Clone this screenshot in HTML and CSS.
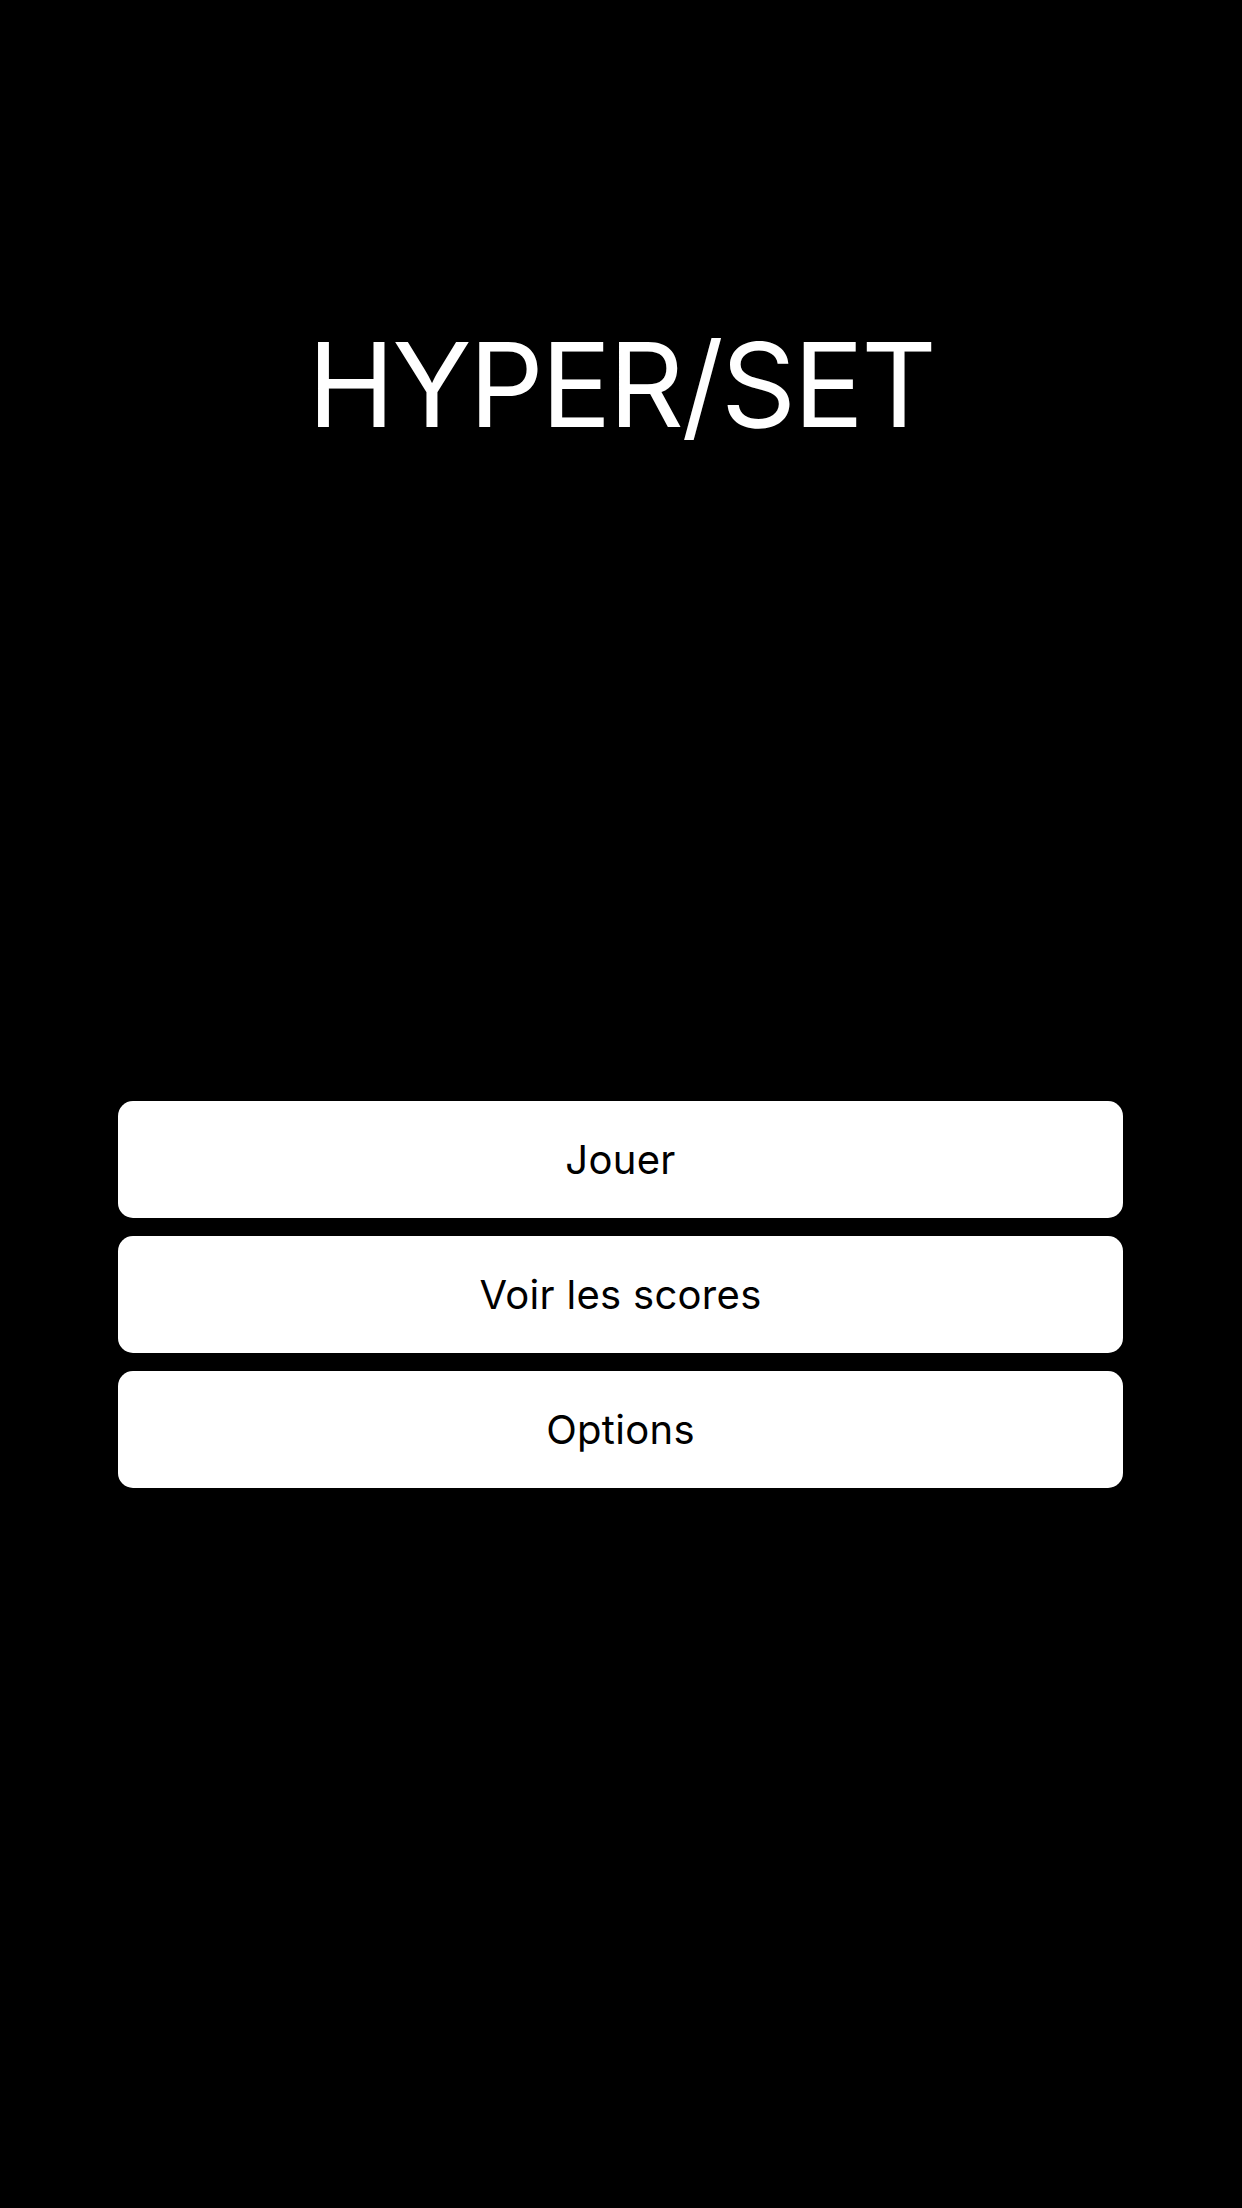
FILE: index.html
```html
<!DOCTYPE html>
<html lang="fr">
<head>
<meta charset="utf-8">
<title>HYPER/SET</title>
<link rel="stylesheet" href="styles.css">
</head>
<body>
<main class="screen">
  <h1 class="title">HYPER/SET</h1>
  <nav class="menu">
    <button class="menu-btn" type="button">Jouer</button>
    <button class="menu-btn" type="button">Voir les scores</button>
    <button class="menu-btn" type="button">Options</button>
  </nav>
</main>
</body>
</html>
```
FILE: styles.css
```css
html, body {
  margin: 0;
  padding: 0;
  background: #000;
}
body {
  width: 1242px;
  height: 2208px;
  overflow: hidden;
  font-family: Inter, "Liberation Sans", sans-serif;
}
.screen {
  display: flex;
  flex-direction: column;
  align-items: stretch;
  padding-top: 326px;
}
.title {
  margin: 0;
  color: #fff;
  font-size: 117px;
  font-weight: 400;
  line-height: 1;
  text-align: center;
  letter-spacing: -2.6px;
}
.menu {
  margin-top: 658px;
  padding: 0 119px 0 118px;
  display: flex;
  flex-direction: column;
  gap: 18px;
}
.menu-btn {
  height: 117px;
  border: 0;
  border-radius: 15px;
  background: #fff;
  color: #000;
  font-family: Inter, "Liberation Sans", sans-serif;
  font-size: 40px;
  font-weight: 400;
  line-height: 1;
  letter-spacing: 0.3px;
  padding: 0;
  display: flex;
  align-items: center;
  justify-content: center;
}
```
